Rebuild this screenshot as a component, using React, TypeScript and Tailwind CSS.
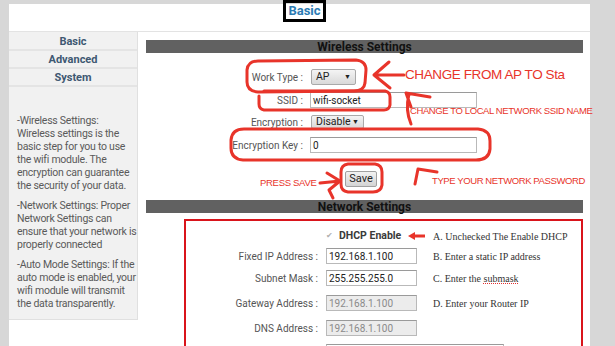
import React from "react";

const RED = "#e8342a";

function Select({ value, width }: { value: string; width: string }) {
  return (
    <div
      className={`${width} h-full flex items-center justify-between rounded-[2px] border border-[#a9a9a9] bg-gradient-to-b from-[#f4f4f4] to-[#d9d9d9] px-[4px] text-[10.5px] text-[#222]`}
    >
      <span>{value}</span>
      <span className="text-[7px]">▼</span>
    </div>
  );
}

function TextBox({
  value,
  width,
  disabled,
}: {
  value: string;
  width: string;
  disabled?: boolean;
}) {
  return (
    <div
      className={`${width} h-[16px] flex items-center border border-[#b9b9b9] border-t-[#9a9a9a] px-[2px] text-[10px] whitespace-nowrap ${
        disabled ? "bg-[#ececec] text-[#8a8a8a]" : "bg-white text-[#222]"
      }`}
    >
      {value}
    </div>
  );
}

function Bar({ title }: { title: string }) {
  return (
    <div className="h-[13px] bg-[#616161] flex items-center justify-center text-[12px] font-bold text-[#111] leading-none">
      {title}
    </div>
  );
}

function FormRow({
  label,
  mt,
  h,
  children,
}: {
  label: string;
  mt: string;
  h: string;
  children: React.ReactNode;
}) {
  return (
    <div className={`${mt} ${h} flex items-stretch`}>
      <div className="w-[157px] flex items-center justify-end whitespace-nowrap">{label}</div>
      <div className="ml-[7px] flex items-stretch">{children}</div>
    </div>
  );
}

const netRows = [
  { label: "Fixed IP Address :", value: "192.168.1.100", note: "B.  Enter a static IP address", mt: "mt-[5px]" },
  { label: "Subnet Mask :", value: "255.255.255.0", note: "C. Enter the submask", mt: "mt-[6px]" },
  { label: "Gateway Address :", value: "192.168.1.100", note: "D. Enter your Router IP", mt: "mt-[9px]", disabled: true },
  { label: "DNS Address :", value: "192.168.1.100", note: "", mt: "mt-[9px]", disabled: true },
];

function Annotations() {
  return (
    <div className="pointer-events-none absolute inset-0 font-['Liberation_Sans',Arial,sans-serif] whitespace-nowrap">
      <svg width="615" height="346" className="absolute inset-0">
        <g fill="none" stroke={RED} strokeWidth="3" strokeLinecap="round" strokeLinejoin="round">
          {/* work type loop */}
          <path d="M258 61 L356 60 Q366 61 366 70 L365 83 Q364 91 354 91 L258 92 Q247 91 247 82 L247 70 Q248 61 258 61 Z" />
          {/* ssid box */}
          <path d="M264 91 L385 91 Q390 92 390 97 L390 105 Q389 110 384 110 L264 110 Q259 109 259 104 L259 96" />
          {/* arrow to work type */}
          <path d="M404 75 L374 75 M374 75 L389 62 M374 75 L390 88" />
          {/* arrow to ssid */}
          <path d="M411 124 Q405 110 409 94 M406 93 L430 97 M406 93 L411 107" />
          {/* encryption key box */}
          <path d="M244 129 L478 129 Q490 130 490 141 L490 149 Q489 160 476 160 L243 160 Q231 159 231 148 L231 140 Q232 129 244 129 Z" />
          {/* save box */}
          <path d="M348 164 L375 164 Q382 165 382 172 L382 185 Q381 192 373 192 L348 192 Q341 191 341 184 L341 172 Q341 165 348 164 Z" />
          {/* press save arrow */}
          <path d="M320 183 L340 181 M327 173 L340 181 L329 190 L333 198" />
          {/* password arrow */}
          <path d="M415 184 L418 169 L437 172" />
        </g>
        {/* dhcp arrow */}
        <path d="M425 236 L413 236" stroke={RED} strokeWidth="3" />
        <path d="M408 236 L415 232 L415 240 Z" fill={RED} />
      </svg>
      <span className="absolute left-[405px] top-[68px] text-[13.5px] leading-none text-[#e8342a] tracking-[-0.4px]">
        CHANGE FROM AP TO Sta
      </span>
      <span className="absolute left-[410px] top-[106px] text-[9.5px] leading-none text-[#e8342a] tracking-[-0.4px]">
        CHANGE TO LOCAL NETWORK SSID NAME
      </span>
      <span className="absolute left-[260px] top-[178px] text-[9.5px] leading-none text-[#e8342a] tracking-[-0.3px]">
        PRESS SAVE
      </span>
      <span className="absolute left-[432px] top-[176px] text-[9.5px] leading-none text-[#e8342a] tracking-[-0.4px]">
        TYPE YOUR NETWORK PASSWORD
      </span>
    </div>
  );
}

export default function App() {
  return (
    <div className="relative w-[615px] h-[346px] overflow-hidden bg-[#d7d7d7] font-['Roboto',sans-serif]">
      <div className="ml-[9px] mt-[4px] w-[581px] h-[342px] bg-white flex flex-col">
        {/* Header */}
        <div className="h-[28px] shrink-0 border-b border-[#e3e3e3]">
          <div className="ml-[274px] -mt-[4px] w-[43px] h-[22px] border-[3px] border-black flex items-center justify-center text-[13px] font-bold text-[#2b7bb3]">
            Basic
          </div>
        </div>

        <div className="flex flex-1">
          {/* Sidebar */}
          <div className="w-[129px] h-[288px] shrink-0 bg-[#f1f1f1] border-r border-b border-[#e0e0e0] pt-[1px]">
            {["Basic", "Advanced", "System"].map((item) => (
              <div
                key={item}
                className="h-[18px] pt-[3px] border-b-2 border-[#e4e4e4] flex items-center justify-center text-[11px] font-bold text-[#3e5872]"
              >
                {item}
              </div>
            ))}
            <div className="pl-[8px] pt-[27px] text-[10.5px] leading-[13px] tracking-[-0.25px] text-[#5a5a5a]">
              <p className="mb-[7px]">
                -Wireless Settings: Wireless settings is the basic step for you to use the wifi module. The encryption can guarantee the security of your data.
              </p>
              <p className="mb-[7px]">
                -Network Settings: Proper Network Settings can ensure that your network is properly connected
              </p>
              <p>
                -Auto Mode Settings: If the auto mode is enabled, your wifi module will transmit the data transparently.
              </p>
            </div>
          </div>

          {/* Main */}
          <div className="ml-[8px] w-[437px] pt-[8px] text-[10px] text-[#555]">
            <Bar title="Wireless Settings" />

            <FormRow label="Work Type :" mt="mt-[16px]" h="h-[16px]">
              <Select value="AP" width="w-[45px] ml-[1px]" />
            </FormRow>
            <FormRow label="SSID :" mt="mt-[7px]" h="h-[16px]">
              <TextBox value="wifi-socket" width="w-[167px]" />
            </FormRow>
            <FormRow label="Encryption :" mt="mt-[7px]" h="h-[14px]">
              <Select value="Disable" width="w-[53px] ml-[1px]" />
            </FormRow>
            <FormRow label="Encryption Key :" mt="mt-[8px]" h="h-[16px]">
              <TextBox value="0" width="w-[167px]" />
            </FormRow>

            <div className="mt-[18px] ml-[199px] w-[32px] h-[16px] rounded-[2px] border border-[#a0a0a0] bg-gradient-to-b from-[#f2f2f2] to-[#d4d4d4] flex items-center justify-center text-[11px] text-[#222]">
              Save
            </div>

            <div className="mt-[13px]">
              <Bar title="Network Settings" />
            </div>

            <div className="mt-[6px] ml-[38px] h-[200px] border-2 border-[#d9141b] pt-[8px]">
              <div className="h-[14px] flex items-center whitespace-nowrap">
                <div className="w-[132px]" />
                <div className="ml-[8px] w-[91px] flex items-center gap-[6px]">
                  <span className="text-[8px] text-[#b0b0b0]">✔</span>
                  <span className="text-[10.5px] font-bold text-[#3a3a3a]">DHCP Enable</span>
                </div>
                <div className="ml-[16px] font-['Liberation_Serif',serif] text-[10px] text-[#333]">
                  A. Unchecked The Enable DHCP
                </div>
              </div>
              {netRows.map((r) => (
                <div key={r.label} className={`${r.mt} flex items-center whitespace-nowrap`}>
                  <div className="w-[132px] text-right">{r.label}</div>
                  <div className="ml-[8px]">
                    <TextBox value={r.value} width="w-[91px]" disabled={r.disabled} />
                  </div>
                  <div className="ml-[16px] font-['Liberation_Serif',serif] text-[10px] text-[#333]">
                    {r.note === "C. Enter the submask" ? (
                      <>
                        C. Enter the{" "}
                        <span className="underline decoration-dotted decoration-[#e03030]">submask</span>
                      </>
                    ) : (
                      r.note
                    )}
                  </div>
                </div>
              ))}
              <div className="mt-[8px] flex items-center whitespace-nowrap">
                <div className="w-[132px] text-right">DHCP Hostname :</div>
                <div className="ml-[8px]">
                  <TextBox value="" width="w-[178px]" />
                </div>
              </div>
            </div>
          </div>
        </div>
      </div>
      <Annotations />
    </div>
  );
}
